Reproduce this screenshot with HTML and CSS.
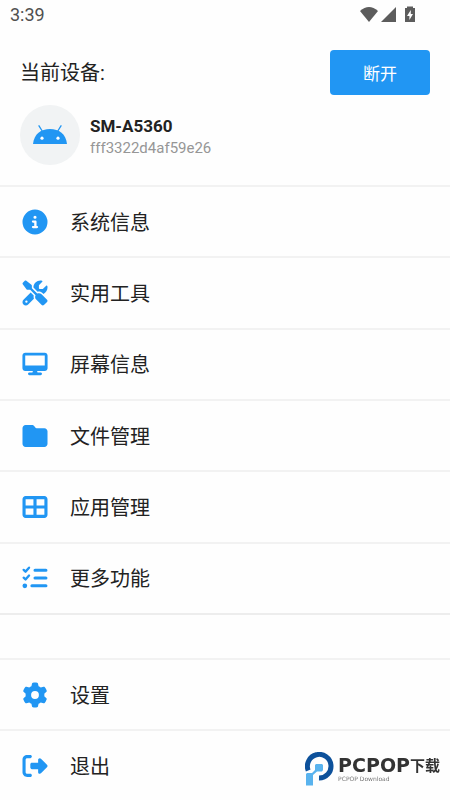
FILE: index.html
```html
<!DOCTYPE html>
<html lang="zh-CN">
<head>
<meta charset="utf-8">
<meta name="viewport" content="width=device-width, initial-scale=1">
<title>设备</title>
<link rel="stylesheet" href="styles.css">
</head>
<body>
<div class="status-bar">
  <span class="clock">3:39</span>
  <svg class="status-icons" viewBox="0 0 56 18" aria-hidden="true">
    <path d="M0 5Q9-3 18 5L9 16Z"/>
    <path d="M36 1V16H21Z"/>
    <path fill-rule="evenodd" d="M47 2V0.5H53V2H55V16H45V2ZM50.8 4L47 10H49.4V14L53 8H50.8Z"/>
  </svg>
</div>

<header class="device">
  <div class="device-top">
    <h1 class="device-title">当前设备:</h1>
    <button class="disconnect" type="button">断开</button>
  </div>
  <div class="device-info">
    <div class="avatar">
      <svg viewBox="0 0 34 20" aria-hidden="true">
        <path d="M0 19C1 9 8 4 17 4S33 9 34 19Z" fill="#2196f3"/>
        <path d="M6 .8 9.2 6M28 .8 24.8 6" stroke="#2196f3" stroke-width="1.3" stroke-linecap="round"/>
        <circle cx="9" cy="13.2" r="1.6" fill="#fff"/><circle cx="25" cy="13.2" r="1.6" fill="#fff"/>
      </svg>
    </div>
    <div class="device-text">
      <strong class="model">SM-A5360</strong>
      <span class="serial">fff3322d4af59e26</span>
    </div>
  </div>
</header>

<nav class="menu menu-main">
  <a class="item" href="#system">
    <svg class="icon" viewBox="-10 -10 532 532" aria-hidden="true"><path d="M256 512A256 256 0 1 0 256 0a256 256 0 1 0 0 512zM216 336h24V272H216c-13.3 0-24-10.7-24-24s10.7-24 24-24h48c13.3 0 24 10.7 24 24v88h8c13.3 0 24 10.7 24 24s-10.7 24-24 24H216c-13.3 0-24-10.7-24-24s10.7-24 24-24zm40-208a32 32 0 1 1 0 64 32 32 0 1 1 0-64z"/></svg>
    <span class="label">系统信息</span>
  </a>
  <a class="item" href="#tools">
    <svg class="icon" viewBox="-10 -10 532 532" aria-hidden="true"><path d="M78.6 5C69.1-2.4 55.6-1.5 47 7L7 47c-8.5 8.5-9.4 22-2.1 31.6l80 104c4.5 5.9 11.6 9.4 19 9.4h54.1l109 109c-14.7 29-10 65.4 14.3 89.6l112 112c12.5 12.5 32.8 12.5 45.3 0l64-64c12.5-12.5 12.5-32.8 0-45.3l-112-112c-24.2-24.2-60.6-29-89.6-14.3l-109-109V104c0-7.5-3.5-14.5-9.4-19L78.6 5zM19.9 396.1C7.2 408.8 0 426.1 0 444.1C0 481.6 30.4 512 67.9 512c18 0 35.3-7.2 48-19.9L233.7 374.3c-7.8-20.9-9-43.6-3.6-65.1l-61.7-61.7L19.9 396.1zM512 144c0-10.5-1.1-20.7-3.2-30.5c-2.4-11.2-16.1-14.1-24.2-6l-63.9 63.9c-3 3-7.1 4.7-11.3 4.7H352c-8.8 0-16-7.2-16-16V102.6c0-4.2 1.7-8.3 4.7-11.3l63.9-63.9c8.1-8.1 5.2-21.8-6-24.2C388.7 1.1 378.5 0 368 0C288.5 0 224 64.5 224 144l0 .8 85.3 85.3c36-9.1 75.8 .5 104 28.7L429 274.5c49-23 83-72.8 83-130.5zM56 432a24 24 0 1 1 48 0 24 24 0 1 1 -48 0z"/></svg>
    <span class="label">实用工具</span>
  </a>
  <a class="item" href="#screen">
    <svg class="icon" viewBox="-10 -42 596 596" aria-hidden="true"><path d="M64 0C28.7 0 0 28.7 0 64V352c0 35.3 28.7 64 64 64H240l-10.7 32H160c-17.7 0-32 14.3-32 32s14.3 32 32 32H416c17.7 0 32-14.3 32-32s-14.3-32-32-32H346.7L336 416H512c35.3 0 64-28.7 64-64V64c0-35.3-28.7-64-64-64H64zM512 64V288H64V64H512z"/></svg>
    <span class="label">屏幕信息</span>
  </a>
  <a class="item" href="#files">
    <svg class="icon" viewBox="-10 -10 532 532" aria-hidden="true"><path d="M64 480H448c35.3 0 64-28.7 64-64V160c0-35.3-28.7-64-64-64H288c-10.1 0-19.6-4.7-25.6-12.8L243.2 57.6C231.1 41.5 212.1 32 192 32H64C28.7 32 0 60.7 0 96V416c0 35.3 28.7 64 64 64z"/></svg>
    <span class="label">文件管理</span>
  </a>
  <a class="item" href="#apps">
    <svg class="icon" viewBox="-10 -10 532 532" aria-hidden="true"><path d="M448 96V224H288V96H448zm0 192V416H288V288H448zM224 224H64V96H224V224zM64 288H224V416H64V288zM64 32C28.7 32 0 60.7 0 96V416c0 35.3 28.7 64 64 64H448c35.3 0 64-28.7 64-64V96c0-35.3-28.7-64-64-64H64z"/></svg>
    <span class="label">应用管理</span>
  </a>
  <a class="item" href="#more">
    <svg class="icon" viewBox="-10 -10 532 532" aria-hidden="true"><g fill="none" stroke="#2196f3" stroke-linecap="round" stroke-linejoin="round"><path stroke-width="48" d="M24 90 62 126 134 46M24 250 62 286 134 206"/><path stroke-width="62" d="M256 96H480M256 256H480M192 416H480"/></g><circle cx="48" cy="416" r="48"/></svg>
    <span class="label">更多功能</span>
  </a>
</nav>

<nav class="menu menu-extra">
  <a class="item" href="#settings">
    <svg class="icon" viewBox="-10 -10 532 532" aria-hidden="true"><path d="M495.900 166.600c3.200 8.700 .5 18.400-6.400 24.600l-43.300 39.400c1.100 8.300 1.700 16.800 1.700 25.400s-.6 17.100-1.700 25.400l43.300 39.400c6.900 6.200 9.600 15.900 6.400 24.600c-4.400 11.900-9.700 23.300-15.800 34.300l-4.700 8.100c-6.600 11-14 21.400-22.100 31.200c-5.900 7.200-15.700 9.600-24.500 6.800l-55.700-17.700c-13.400 10.300-28.200 18.900-44 25.400l-12.500 57.100c-2 9.100-9 16.300-18.200 17.800c-13.800 2.300-28 3.500-42.500 3.500s-28.700-1.200-42.500-3.500c-9.200-1.500-16.200-8.700-18.200-17.800l-12.500-57.100c-15.800-6.500-30.600-15.100-44-25.400L83.100 425.900c-8.800 2.800-18.600 .3-24.500-6.800c-8.100-9.800-15.500-20.200-22.100-31.200l-4.700-8.100c-6.100-11-11.400-22.400-15.800-34.300c-3.200-8.700-.5-18.400 6.400-24.600l43.300-39.400C64.600 273.100 64 264.600 64 256s.6-17.100 1.700-25.400L22.400 191.200c-6.900-6.200-9.600-15.900-6.400-24.600c4.400-11.900 9.700-23.300 15.800-34.300l4.700-8.100c6.600-11 14-21.400 22.100-31.200c5.900-7.200 15.700-9.600 24.500-6.800l55.700 17.700c13.400-10.300 28.200-18.900 44-25.400l12.500-57.100c2-9.100 9-16.300 18.200-17.800C227.300 1.200 241.500 0 256 0s28.700 1.200 42.500 3.500c9.200 1.500 16.200 8.700 18.200 17.800l12.500 57.100c15.800 6.500 30.600 15.100 44 25.400l55.700-17.700c8.800-2.800 18.600-.3 24.500 6.800c8.100 9.800 15.500 20.200 22.100 31.200l4.700 8.100c6.100 11 11.400 22.400 15.800 34.300zM256 336a80 80 0 1 0 0-160 80 80 0 1 0 0 160z"/></svg>
    <span class="label">设置</span>
  </a>
  <a class="item" href="#exit">
    <svg class="icon" viewBox="-10 -10 532 532" aria-hidden="true"><path d="M377.900 105.900L500.700 228.700c7.200 7.200 11.300 17.100 11.300 27.300s-4.100 20.100-11.300 27.300L377.900 406.100c-6.400 6.400-15 9.900-24 9.900c-18.700 0-33.900-15.200-33.900-33.900l0-62.100-128 0c-17.700 0-32-14.300-32-32l0-64c0-17.700 14.300-32 32-32l128 0 0-62.100c0-18.700 15.200-33.900 33.900-33.900c9 0 17.600 3.600 24 9.900zM160 96L96 96c-17.700 0-32 14.300-32 32l0 256c0 17.700 14.300 32 32 32l64 0c17.700 0 32 14.300 32 32s-14.300 32-32 32l-64 0c-53 0-96-43-96-96L0 128C0 75 43 32 96 32l64 0c17.700 0 32 14.300 32 32s-14.300 32-32 32z"/></svg>
    <span class="label">退出</span>
  </a>
</nav>

<div class="brand">
  <svg class="brand-mark" viewBox="0 0 30 34" aria-hidden="true">
    <path d="M3.200 18.500A11.800 11.800 0 1 1 14 26" fill="none" stroke="#0d519b" stroke-width="5"/>
    <path d="M11 12H17L18 13V18L17 19.500H12L8 23V33.500H1V22L2 21H7L10 18V13Z" fill="#59b3ee"/>
  </svg>
  <div class="brand-text">
    <div class="brand-name">PCPOP<span class="brand-cn">下载</span></div>
    <div class="brand-sub">PCPOP Download</div>
  </div>
</div>
</body>
</html>
```

FILE: styles.css
```css
* {
  box-sizing: border-box;
}

body {
  margin: 0;
  background: #fefefe;
  color: #222;
  font-family: Roboto, "Noto Sans CJK SC", sans-serif;
}

.status-bar {
  display: flex;
  justify-content: space-between;
  align-items: center;
  height: 30px;
  padding: 0 34px 0 10px;
}

.clock {
  color: #505050;
  font-size: 18px;
  line-height: 30px;
}

.status-icons {
  width: 56px;
  height: 18px;
  fill: #5c5c5c;
}

.device {
  padding: 20px;
}

.device-top {
  display: flex;
  justify-content: space-between;
  align-items: center;
  margin-bottom: 10px;
}

.device-title {
  margin: 0;
  font-size: 20px;
  font-weight: 400;
  line-height: 30px;
}

.disconnect {
  width: 100px;
  height: 45px;
  border: 0;
  border-radius: 4px;
  background: #2196f3;
  color: #fff;
  font-family: inherit;
  font-size: 17px;
}

.device-info {
  display: flex;
  align-items: center;
  gap: 10px;
}

.avatar {
  display: flex;
  align-items: center;
  justify-content: center;
  width: 60px;
  height: 60px;
  border-radius: 50%;
  background: #f1f3f4;
}

.avatar svg {
  width: 34px;
  height: 20px;
}

.device-text {
  display: flex;
  flex-direction: column;
  padding-top: 4px;
}

.model {
  font-size: 17px;
  font-weight: 700;
  line-height: 22px;
}

.serial {
  color: #969696;
  font-size: 15px;
  line-height: 22px;
}

.menu {
  display: grid;
  grid-auto-rows: 1fr;
}

.menu-main {
  min-height: 430px;
  border-bottom: 2px solid #ededed;
}

.menu-extra {
  min-height: 142px;
  margin-top: 43px;
}

.item {
  display: flex;
  align-items: center;
  gap: 22px;
  padding: 0 22px;
  border-top: 2px solid #f2f2f2;
  color: inherit;
  font-size: 20px;
  line-height: 30px;
  text-decoration: none;
}

.label {
  padding-top: 2px;
}

.icon {
  flex: none;
  width: 26px;
  height: 26px;
  fill: #2196f3;
}

.brand {
  position: fixed;
  right: 10px;
  bottom: 14px;
  display: flex;
  align-items: center;
  gap: 3px;
}

.brand-mark {
  width: 30px;
  height: 34px;
}

.brand-name {
  display: flex;
  align-items: center;
  color: #333;
  font-family: "DejaVu Sans", sans-serif;
  font-size: 19px;
  font-weight: 700;
  line-height: 20px;
}

.brand-cn {
  font-family: "Noto Sans CJK SC", sans-serif;
  font-size: 15px;
}

.brand-sub {
  color: #777;
  font-family: "DejaVu Sans", sans-serif;
  font-size: 6px;
  line-height: 8px;
}
```
